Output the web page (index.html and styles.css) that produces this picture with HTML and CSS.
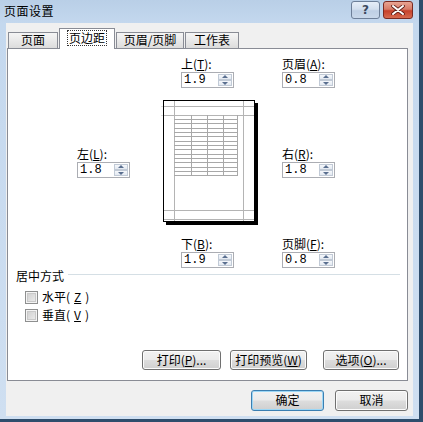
FILE: index.html
```html
<!DOCTYPE html>
<html>
<head>
<meta charset="utf-8">
<link rel="stylesheet" href="styles.css">
</head>
<body>
<div class="window">
  <div class="titlebar">
    <span class="title">页面设置</span>
    <div class="caption-btns">
      <span class="cbtn help">?</span>
      <span class="cbtn close">
        <svg width="14" height="10" viewBox="0 0 14 10"><path d="M2 1 L12 9 M12 1 L2 9" stroke="#5a1a14" stroke-width="3.6" stroke-linecap="round"/><path d="M2 1 L12 9 M12 1 L2 9" stroke="#fff" stroke-width="2" stroke-linecap="round"/></svg>
      </span>
    </div>
  </div>
  <div class="client">
    <div class="tabs">
      <span class="tab t1">页面</span>
      <span class="tab t2 active"><span class="focus">页边距</span></span>
      <span class="tab t3">页眉/页脚</span>
      <span class="tab t4">工作表</span>
    </div>
    <div class="panel">
      <div class="margins">
        <div class="field f-top">
          <div class="lbl">上(<u>T</u>):</div>
          <div class="spin"><span class="val">1.9</span><span class="arrows"><i class="up"></i><i class="down"></i></span></div>
        </div>
        <div class="field f-header">
          <div class="lbl">页眉(<u>A</u>):</div>
          <div class="spin"><span class="val">0.8</span><span class="arrows"><i class="up"></i><i class="down"></i></span></div>
        </div>
        <div class="field f-left">
          <div class="lbl">左(<u>L</u>):</div>
          <div class="spin"><span class="val">1.8</span><span class="arrows"><i class="up"></i><i class="down"></i></span></div>
        </div>
        <div class="preview">
          <svg width="96" height="126" viewBox="0 0 96 126">
            <g stroke="#dcdcdc" stroke-width="1">
              <path d="M11.5 0 V2 M80.5 0 V2 M0 6.5 H-2 M0 15.5 H-2"/>
            </g>
            <rect x="3" y="3" width="92" height="122" fill="#000"/>
            <rect x="0.5" y="0.5" width="91" height="121" fill="#fff" stroke="#000"/>
            <g stroke="#b4b4b4" stroke-width="1" fill="none">
              <path d="M11.5 1 V121 M80.5 1 V121 M1 6.5 H91 M1 15.5 H91 M1 110.5 H91 M1 119.5 H91"/>
            </g>
            <g stroke="#a8a8a8" stroke-width="1" fill="none">
              <path d="M28.5 15 V76 M44.5 15 V76 M60.5 15 V76 M74.5 15 V76"/>
              <path d="M11 19.5 H75 M11 23.5 H75 M11 28.5 H75 M11 32.5 H75 M11 36.5 H75 M11 41.5 H75 M11 45.5 H75 M11 49.5 H75 M11 54.5 H75 M11 58.5 H75 M11 62.5 H75 M11 67.5 H75 M11 71.5 H75 M11 75.5 H75"/>
            </g>
          </svg>
        </div>
        <div class="field f-right">
          <div class="lbl">右(<u>R</u>):</div>
          <div class="spin"><span class="val">1.8</span><span class="arrows"><i class="up"></i><i class="down"></i></span></div>
        </div>
        <div class="field f-bottom">
          <div class="lbl">下(<u>B</u>):</div>
          <div class="spin"><span class="val">1.9</span><span class="arrows"><i class="up"></i><i class="down"></i></span></div>
        </div>
        <div class="field f-footer">
          <div class="lbl">页脚(<u>F</u>):</div>
          <div class="spin"><span class="val">0.8</span><span class="arrows"><i class="up"></i><i class="down"></i></span></div>
        </div>
      </div>
      <div class="group">
        <div class="group-head"><span>居中方式</span><span class="rule"></span></div>
        <label class="check"><span class="box"></span>水平(<u>Z</u>)</label>
        <label class="check"><span class="box"></span>垂直(<u>V</u>)</label>
      </div>
      <div class="actions">
        <span class="btn b-print">打印(<u>P</u>)...</span>
        <span class="btn b-preview">打印预览(<u>W</u>)</span>
        <span class="btn b-options">选项(<u>O</u>)...</span>
      </div>
    </div>
    <div class="dialog-btns">
      <span class="btn default">确定</span>
      <span class="btn">取消</span>
    </div>
  </div>
</div>
</body>
</html>
```
FILE: styles.css
```css
* { box-sizing: border-box; }
html, body { margin: 0; padding: 0; }
body {
  width: 423px;
  height: 422px;
  overflow: hidden;
  background: #2e4d6c;
  font-family: "Noto Sans CJK SC", "Noto Sans", sans-serif;
  font-size: 12px;
  color: #000;
}
u { text-decoration: underline; text-underline-offset: 1px; }

.window {
  width: 419px;
  height: 419px;
  background: linear-gradient(#b9cfe7 0px, #c4d8ee 24px, #cfdff1 100%);
  padding: 0 6px 3px 6px;
  display: flex;
  flex-direction: column;
}

.titlebar {
  height: 23px;
  margin: 0 -6px;
  padding: 0 6px 0 4px;
  display: flex;
  align-items: flex-start;
  justify-content: space-between;
}
.title {
  font-size: 12px;
  line-height: 14px;
  padding-top: 4px;
  letter-spacing: 0.5px;
}
.caption-btns {
  display: flex;
  gap: 3px;
  padding-top: 1px;
}
.cbtn {
  height: 18px;
  border: 1px solid #6d7f98;
  border-radius: 3px;
  display: flex;
  align-items: center;
  justify-content: center;
}
.help {
  width: 29px;
  background: linear-gradient(#e6eef8 0%, #d3dfee 45%, #becfe4 55%, #c9d8ea 100%);
  color: #3b4a5e;
  font-family: "DejaVu Sans", sans-serif;
  font-size: 12px;
  font-weight: bold;
  line-height: 1;
}
.close {
  width: 30px;
  border-color: #7a2a22;
  background: linear-gradient(#e8a493 0%, #d77b67 45%, #c6412b 55%, #d66a50 100%);
}

.client {
  flex: 1;
  background: #f0f0f0;
  padding: 5px 5px 0 1px;
  display: flex;
  flex-direction: column;
}

.tabs {
  height: 20px;
  display: flex;
  align-items: flex-end;
  padding-left: 1px;
  position: relative;
  z-index: 1;
}
.tab {
  height: 16px;
  border: 1px solid #898c95;
  border-bottom: none;
  margin-right: 1px;
  background: linear-gradient(#f5f5f5 0%, #e9e9e9 50%, #dcdcdc 100%);
  line-height: 14px;
  text-align: center;
}
.t1 { width: 50px; }
.t2 { width: 56px; }
.t3 { width: 68px; }
.t4 { width: 54px; }
.tab.active {
  height: 21px;
  margin-bottom: -1px;
  background: #fff;
  padding-top: 1px;
  display: flex;
  justify-content: center;
  align-items: flex-start;
}
.focus {
  border: 1px dotted #333;
  line-height: 14px;
  padding: 0 1px;
}

.panel {
  height: 333px;
  background: #fff;
  border: 1px solid #898c95;
  padding-top: 8px;
  display: flex;
  flex-direction: column;
}

.margins {
  display: grid;
  grid-template-columns: 86px 119px auto;
  margin-left: 69px;
}
.field { display: flex; flex-direction: column; }
.lbl { line-height: 14px; height: 15px; }
.f-top { grid-column: 2; grid-row: 1; padding-left: 18px; }
.f-header { grid-column: 3; grid-row: 1; }
.f-left { grid-column: 1; grid-row: 2; align-self: center; }
.preview { grid-column: 2; grid-row: 2; margin: 12px 0 11px; height: 126px; }
.preview svg { display: block; overflow: visible; }
.f-right { grid-column: 3; grid-row: 2; align-self: center; }
.f-bottom { grid-column: 2; grid-row: 3; padding-left: 18px; }
.f-footer { grid-column: 3; grid-row: 3; }

.spin {
  width: 53px;
  height: 16px;
  border: 1px solid #abadb3;
  background: #fff;
  display: flex;
}
.val {
  flex: 1;
  padding-left: 2px;
  font-family: "Liberation Mono", monospace;
  font-size: 12px;
  line-height: 14px;
}
.arrows {
  width: 16px;
  padding: 1px;
  display: flex;
  flex-direction: column;
}
.arrows i {
  flex: 1;
  position: relative;
  border: 1px solid #c1cad6;
  background: linear-gradient(#f6f8fb, #e3e9f1);
}
.arrows i::after {
  content: "";
  position: absolute;
  left: 50%;
  top: 50%;
  margin-left: -3px;
  border-left: 3px solid transparent;
  border-right: 3px solid transparent;
}
.arrows .up::after { border-bottom: 3px solid #5a6f8f; margin-top: -2px; }
.arrows .down::after { border-top: 3px solid #5a6f8f; margin-top: -1px; }

.group {
  margin-top: 0;
  padding-left: 8px;
  display: flex;
  flex-direction: column;
}
.group-head {
  display: flex;
  align-items: center;
  gap: 4px;
  line-height: 14px;
  height: 16px;
  margin-right: 7px;
}
.rule {
  flex: 1;
  height: 1px;
  background: #d5dfe5;
  margin-top: -3px;
}
.check {
  display: flex;
  align-items: center;
  gap: 4px;
  height: 18px;
  line-height: 14px;
  padding-left: 9px;
}
.check:first-of-type { margin-top: 4px; }
.box {
  width: 13px;
  height: 13px;
  border: 1px solid #8e8f8f;
  box-shadow: inset 0 0 0 1px #f4f4f4, inset 0 0 0 2px #c9c9c9;
  background-image: linear-gradient(135deg, #cbcbcb, #f0f0f0);
}

.actions {
  margin-top: auto;
  margin-bottom: 10px;
  display: flex;
  justify-content: flex-end;
  padding-right: 8px;
}
.btn {
  height: 20px;
  border: 1px solid #707070;
  border-radius: 3px;
  background: linear-gradient(#f2f2f2 0%, #ebebeb 48%, #dddddd 52%, #cfcfcf 100%);
  line-height: 17px;
  text-align: center;
  box-shadow: inset 0 0 0 1px #fcfcfc;
}
.b-print { width: 79px; }
.b-preview { width: 77px; margin-left: 9px; }
.b-options { width: 76px; margin-left: 16px; }

.dialog-btns {
  margin-top: 9px;
  display: flex;
  justify-content: flex-end;
  gap: 11px;
}
.dialog-btns .btn { width: 73px; height: 21px; line-height: 18px; }
.btn.default {
  border-color: #3c7fb1;
  box-shadow: inset 0 0 0 1px #9cd7f6;
}
```
